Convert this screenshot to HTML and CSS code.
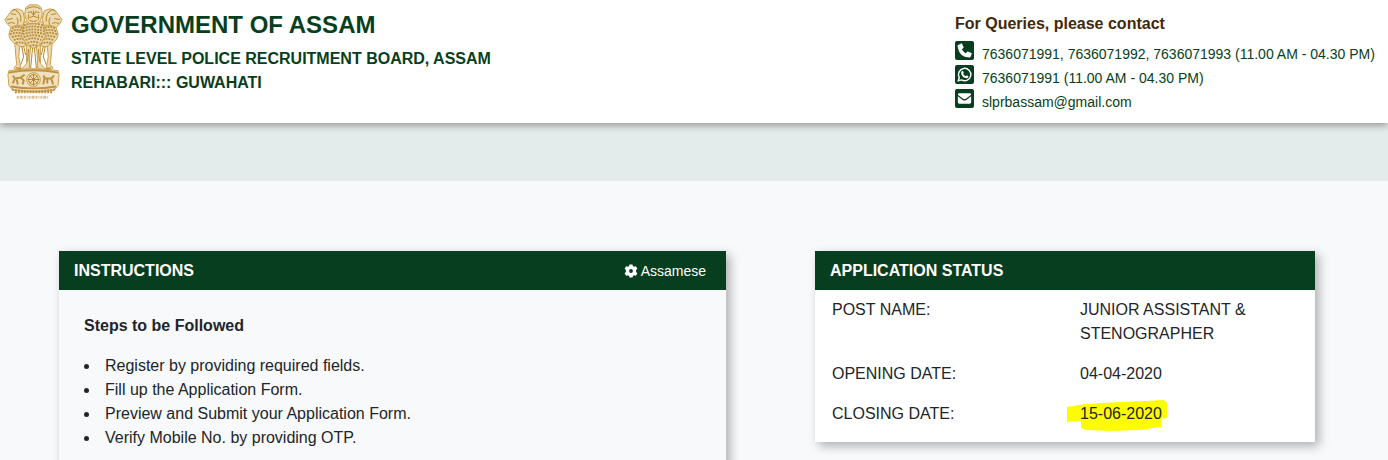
FILE: index.html
```
<!DOCTYPE html>
<html lang="en">

<head>
    <meta charset="UTF-8">
    <meta name="viewport" content="width=device-width, initial-scale=1.0">
    <title>State Level Police Recruitment Board, Assam</title>
    <link rel="stylesheet" href="styles.css">
</head>

<body>
    <header class="header">
        <div class="brand">
            <svg class="emblem" viewBox="0 0 60 98" role="img" aria-label="Emblem of India">
                <!-- side lions -->
                <g id="lion">
                    <path class="fill" d="M7 8 L13 5 L19 7 L21 15 L20 23 L13 25 L7 24 L3 20 L1 16 L4 12 Z" />
                    <path class="line" d="M3 16 L9 15 M4 20 Q8 18 11 20 M7 10 L12 11 M12 7 Q18 9 17 18 M13 14 Q16 19 12 23 M7 8 Q10 4 13 7" />
                    <path class="fill" d="M7 24 Q14 20 22 23 L24 41 Q19 46 13 42 Q5 37 5 31 Z" />
                    <path class="curl" d="M8 25 Q14 22 20 25 M7 28 Q14 25 22 28 M6 31 Q14 28 22 31 M8 34 Q15 31 23 34 M10 37 Q16 34 23 37 M12 40 Q17 38 23 41" />
                    <path class="fill" d="M11 40 L16 43 L15 54 L17 65 L12 67 L10 65 L13 62 L12 53 Z" />
                    <path class="line" d="M18 43 L20 54 L17 62 M20 43 L22 52 M12 65 L18 66" />
                </g>
                <use href="#lion" transform="translate(60 0) scale(-1 1)" />
                <!-- front lion -->
                <path class="fill" d="M20 19 Q30 15 40 19 L42 33 L36 43 Q30 47 24 43 L18 33 Z" />
                <path class="curl" d="M20 22 Q30 18 40 22 M19 25 Q30 21 41 25 M19 28 Q30 24 41 28 M19 31 Q30 27 41 31 M20 34 Q30 30 40 34 M22 37 Q30 33 38 37 M24 40 Q30 37 36 40 M26 43 Q30 41 34 43" />
                <path class="fill" d="M22 4 L26 1 L34 1 L38 4 L39 11 L37 17 L34 20 L26 20 L23 17 L21 11 Z" />
                <path class="line" d="M23 5 Q30 1 37 5 M24 9 L28 8 L29 11 M36 9 L32 8 L31 11 M30 7 L30 12 M26 14 Q30 11 34 14 M26 17 Q30 19 34 17 M25 11 L25 16 M35 11 L35 16" />
                <path class="fill" d="M23 41 L27 44 L26 55 L26 65 L20 68 L18 66 L23 61 Z M37 41 L33 44 L34 55 L34 65 L40 68 L42 66 L37 61 Z" />
                <path class="line" d="M29 45 L28 56 L27 66 M31 45 L32 56 L33 66 M25 46 L24 59 M35 46 L36 59" />
                <!-- abacus with wheel -->
                <path class="base" d="M5 68 Q30 64 55 68 L56 72 L55 83 L51 88 Q30 91 9 88 L5 83 L4 72 Z" />
                <path class="dark" d="M5 70 Q30 65 55 70 M7 84 Q30 88 53 84" />
                <path class="curl" d="M8 87 Q30 91 52 87 M11 90 L49 90" />
                <circle class="base" cx="30" cy="77" r="7" />
                <circle class="line" cx="30" cy="77" r="5" />
                <path class="line" d="M30 71 V83 M24 77 H36 M26 73 L34 81 M34 73 L26 81" />
                <path class="dark" d="M9 81 L11 76 L9 73 M11 76 L17 75 L20 78 L19 82 M13 77 L14 82 M17 75 L21 72 M40 82 L41 76 L48 76 L51 73 M48 76 L50 82 M44 77 L44 81 M40 73 L42 76" />
                <path class="motto" d="M13 95 H45" />
            </svg>
            <div>
                <h1>GOVERNMENT OF ASSAM</h1>
                <p>STATE LEVEL POLICE RECRUITMENT BOARD, ASSAM</p>
                <p>REHABARI::: GUWAHATI</p>
            </div>
        </div>
        <div class="contact">
            <h2>For Queries, please contact</h2>
            <ul>
                <li>
                    <svg viewBox="0 0 20 20" aria-hidden="true">
                        <rect width="20" height="20" rx="2" />
                        <path class="glyph" d="M3.200 4.100 L6.600 2.500 Q7.200 2.300 7.500 2.900 L9 6.500 Q9.200 7 8.800 7.300 L7.200 8.700 Q8.600 11.500 11.400 12.800 L12.800 11.200 Q13.100 10.800 13.600 11 L17.200 12.500 Q17.800 12.800 17.600 13.400 L16.400 16.700 Q16.200 17.400 15.300 17.400 Q4 17 2.700 5 Q2.600 4.400 3.200 4.100 Z" />
                    </svg>
                    <span>7636071991, 7636071992, 7636071993 (11.00 AM - 04.30 PM)</span>
                </li>
                <li>
                    <svg viewBox="0 0 20 20" aria-hidden="true">
                        <rect width="20" height="20" rx="2" />
                        <path class="ring" d="M3.500 16.600 L4.500 13.200 A6.500 6.500 0 1 1 7 15.700 Z" />
                        <path class="glyph" d="M7.500 6.300 H8.400 L9.300 8.400 L8.500 9.500 Q9.400 11.100 11.300 11.900 L12.200 10.900 L14.200 11.800 Q14.100 13.700 12.200 13.900 Q7.300 13.600 6.400 8.400 Q6.500 6.900 7.500 6.300 Z" />
                    </svg>
                    <span>7636071991 (11.00 AM - 04.30 PM)</span>
                </li>
                <li>
                    <svg viewBox="0 0 20 20" aria-hidden="true">
                        <rect width="20" height="20" rx="2" />
                        <path class="glyph" d="M3 6 Q3 4.500 4.500 4.500 H15.500 Q17 4.500 17 6 L11.500 10.200 Q10 11.200 8.500 10.200 Z M3 7.700 L8 11.500 Q10 12.900 12 11.500 L17 7.700 V14 Q17 15.500 15.500 15.500 H4.500 Q3 15.500 3 14 Z" />
                    </svg>
                    <span>slprbassam@gmail.com</span>
                </li>
            </ul>
        </div>
    </header>

    <div class="nav-strip"></div>

    <main class="content">
        <section class="card instructions">
            <div class="card-header">
                <h2>INSTRUCTIONS</h2>
                <a class="language" href="#">
                    <svg viewBox="0 0 14 14" aria-hidden="true">
                        <path fill-rule="evenodd" d="M5.500 0.500 H8.500 L8.900 2.100 L10 2.700 L11.900 2.200 L13.400 4.700 L12.100 6 V8 L13.400 9.300 L11.900 11.800 L10 11.300 L8.900 11.900 L8.500 13.500 H5.500 L5.100 11.900 L4 11.300 L2.100 11.800 L0.600 9.300 L1.900 8 V6 L0.600 4.700 L2.100 2.200 L4 2.700 L5.100 2.100 Z M7 5.100 A1.900 1.900 0 1 0 7 8.900 A1.900 1.900 0 1 0 7 5.100 Z" />
                    </svg>
                    Assamese
                </a>
            </div>
            <div class="card-body">
                <h3>Steps to be Followed</h3>
                <ul>
                    <li>Register by providing required fields.</li>
                    <li>Fill up the Application Form.</li>
                    <li>Preview and Submit your Application Form.</li>
                    <li>Verify Mobile No. by providing OTP.</li>
                </ul>
            </div>
        </section>

        <section class="card status">
            <div class="card-header">
                <h2>APPLICATION STATUS</h2>
            </div>
            <table>
                <tbody>
                    <tr>
                        <th scope="row">POST NAME:</th>
                        <td>JUNIOR ASSISTANT &amp; STENOGRAPHER</td>
                    </tr>
                    <tr>
                        <th scope="row">OPENING DATE:</th>
                        <td>04-04-2020</td>
                    </tr>
                    <tr>
                        <th scope="row">CLOSING DATE:</th>
                        <td>
                            <span class="marked">
                                <svg viewBox="0 0 102 32" aria-hidden="true">
                                    <path d="M1 7 L20 4 L55 2 L80 1 L97 0 Q101 1 101 4 V18 L95 19 V27 L74 30 L44 31 L20 30 L15 28 V21 L1 22 Z" />
                                </svg>
                                <span>15-06-2020</span>
                            </span>
                        </td>
                    </tr>
                </tbody>
            </table>
        </section>
    </main>
</body>

</html>
```
FILE: styles.css
```
* {
    box-sizing: border-box;
}

body {
    margin: 0;
    font-family: "Liberation Sans", Arial, sans-serif;
    font-size: 16px;
    line-height: 24px;
    color: #212529;
    background-color: #f7f9fb;
}

h1,
h2,
h3,
p,
ul {
    margin: 0;
    padding: 0;
}

h2,
h3 {
    font-size: 16px;
}

/* header */
.header {
    position: relative;
    display: grid;
    grid-template-columns: 955fr 433fr;
    padding-bottom: 10px;
    background: #fff;
    box-shadow: 0 2px 8px rgba(0, 0, 0, 0.4);
}

.brand {
    display: flex;
    gap: 8px;
    padding: 3px 0 0 4px;
    color: #083e20;
}

.emblem {
    width: 59px;
    height: 98px;
}

.emblem path,
.emblem circle {
    fill: none;
    stroke: #c99f4b;
    stroke-width: 1;
}

.emblem .fill {
    fill: #ecd9b0;
}

.emblem .base {
    fill: #f1e2bf;
}

.emblem .line {
    stroke: #b78424;
}

.emblem .curl {
    stroke: #bb8d38;
    stroke-width: 2;
    stroke-dasharray: 2 1;
}

.emblem .dark {
    stroke: #be9040;
    stroke-width: 2;
}

.emblem .motto {
    stroke: #d8c096;
    stroke-width: 3;
    stroke-dasharray: 2 1 3 1 2 1 1 1;
}

.brand h1 {
    padding-top: 8px;
    margin-bottom: 8px;
    font-size: 24px;
    line-height: 28px;
}

.brand p {
    font-weight: bold;
}

.contact {
    padding-top: 12px;
    color: #083e20;
    white-space: nowrap;
}

.contact h2 {
    margin-bottom: 5px;
    color: #3f2a0c;
}

.contact ul {
    list-style: none;
}

.contact li {
    display: flex;
    gap: 8px;
    height: 24px;
    font-size: 14px;
}

.contact li span {
    padding-top: 2px;
    line-height: 22px;
}

.contact svg {
    width: 19px;
    height: 19px;
    fill: #083e20;
}

.contact .glyph {
    fill: #fff;
}

.contact .ring {
    fill: none;
    stroke: #fff;
    stroke-width: 1.5;
}

.nav-strip {
    height: 58px;
    background: #e3ecea;
}

/* cards */
.content {
    display: grid;
    grid-template-columns: 667fr 500fr;
    align-items: start;
    gap: 89px;
    padding: 70px 73px 0 59px;
}

.card {
    box-shadow: 4px 4px 10px rgba(0, 0, 0, 0.3);
}

.card-header {
    display: flex;
    justify-content: space-between;
    align-items: center;
    height: 39px;
    padding: 0 20px 0 15px;
    color: #fff;
    background: #083e20;
}

.language {
    display: flex;
    align-items: center;
    gap: 3px;
    font-size: 14px;
    color: #fff;
    text-decoration: none;
}

.language svg {
    width: 14px;
    height: 14px;
    fill: #fff;
}

.instructions {
    background: #f7f9fb;
}

.card-body {
    padding: 24px 25px;
}

.card-body h3 {
    margin-bottom: 16px;
}

.card-body ul {
    list-style: none;
}

.card-body li {
    display: flex;
    align-items: center;
    gap: 16px;
}

.card-body li::before {
    content: "";
    width: 5px;
    height: 5px;
    border-radius: 50%;
    background: #212529;
}

.status {
    padding-bottom: 8px;
    background: #fff;
}

.status table {
    width: 100%;
    table-layout: fixed;
    border-collapse: collapse;
}

.status th,
.status td {
    padding: 8px 17px;
    font-weight: normal;
    text-align: left;
    vertical-align: top;
}

.status td {
    padding-right: 60px;
    padding-left: 15px;
}

/* highlighter stroke behind the date */
.marked {
    position: relative;
}

.marked svg {
    position: absolute;
    top: -5px;
    left: -14px;
    width: 102px;
    height: 32px;
    fill: #fdfc00;
}

.marked span {
    position: relative;
}
```
